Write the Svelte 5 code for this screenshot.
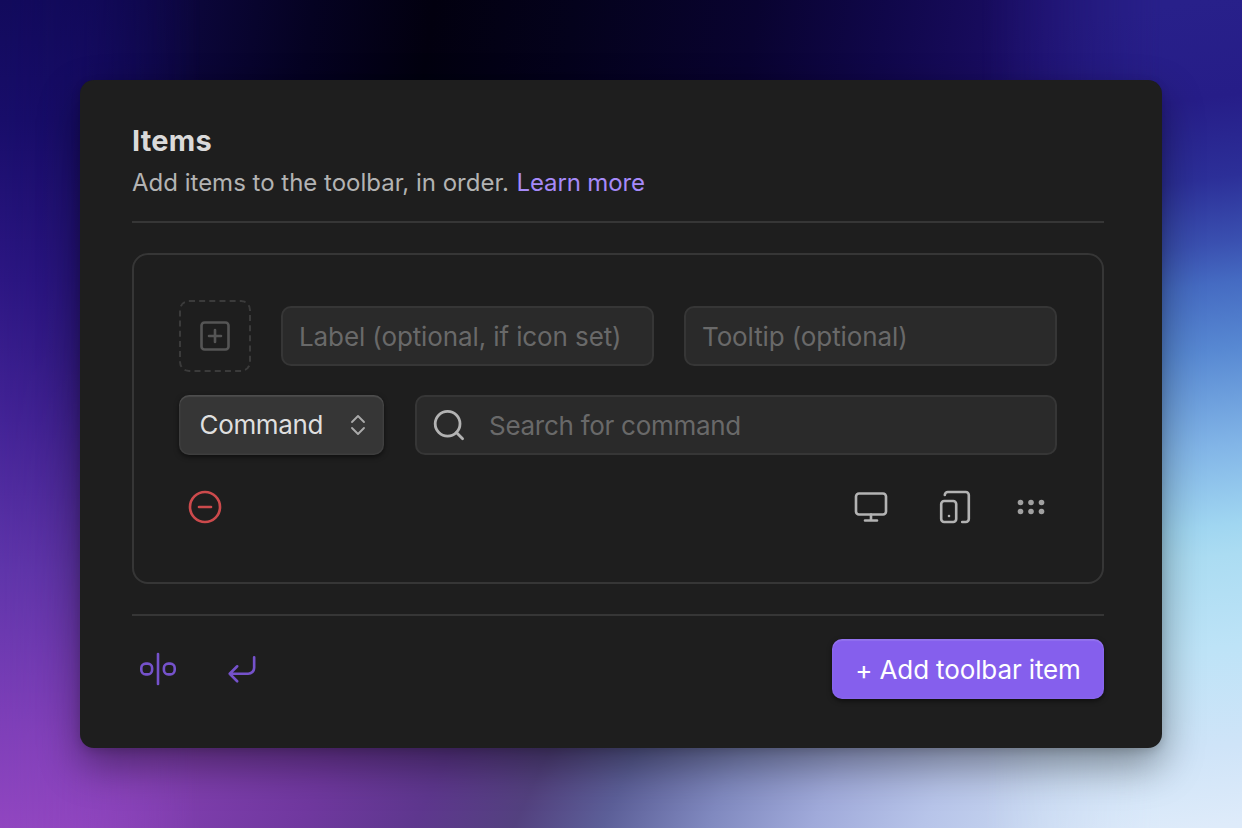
<script>
  let label = $state('');
  let tooltip = $state('');
  let query = $state('');
</script>

<main class="stage">
  <div class="wash bottom"></div>
  <div class="wash left"></div>
  <div class="wash right"></div>
  <section class="panel">
    <header>
      <h1>Items</h1>
      <p>Add items to the toolbar, in order. <a href="#learn">Learn more</a></p>
    </header>

    <div class="item">
      <div class="row first">
        <button class="icon-slot" aria-label="Choose icon">
          <svg width="36" height="36" viewBox="0 0 24 24"><rect x="3" y="3" width="18" height="18" rx="2" /><path d="M8 12h8M12 8v8" /></svg>
        </button>
        <input class="field" bind:value={label} placeholder="Label (optional, if icon set)" />
        <input class="field tip" bind:value={tooltip} placeholder="Tooltip (optional)" />
      </div>
      <div class="row second">
        <button class="select">
          <span>Command</span>
          <svg width="16" height="22" viewBox="0 0 16 22"><path d="M2 8l6-6 6 6M2 14l6 6 6-6" /></svg>
        </button>
        <label class="field search">
          <svg width="36" height="36" viewBox="0 0 36 36"><circle cx="16.6" cy="16.8" r="12.4" /><path d="M25.4 25.6l6.2 6.2" /></svg>
          <input bind:value={query} placeholder="Search for command" />
        </label>
      </div>
      <div class="row actions">
        <button class="ico remove" aria-label="Remove">
          <svg width="36" height="36" viewBox="0 0 24 24"><circle cx="12" cy="12" r="10" /><path d="M8 12h8" /></svg>
        </button>
        <div class="tools">
          <button class="ico" aria-label="Desktop">
            <svg width="36" height="36" viewBox="0 0 24 24"><rect x="2" y="3" width="20" height="14" rx="2" /><path d="M8 21h8M12 17v4" /></svg>
          </button>
          <button class="ico" aria-label="Mobile">
            <svg width="36" height="36" viewBox="0 0 24 24"><rect x="2.8" y="8" width="10" height="14" rx="2" /><path d="M5.2 4a2 2 0 0 1 2-2h12a2 2 0 0 1 2 2v16a2 2 0 0 1-2 2h-2.4M8 18h.01" /></svg>
          </button>
          <button class="ico grip" aria-label="Reorder">
            <svg width="30" height="18" viewBox="0 0 30 18">
              {#each [4.5, 15, 25.5] as x}
                {#each [4.5, 13.5] as y}
                  <circle cx={x} cy={y} r="2.8" />
                {/each}
              {/each}
            </svg>
          </button>
        </div>
      </div>
    </div>

    <footer>
      <div class="extras">
        <button class="ico" aria-label="Add separator">
          <svg width="36" height="36" viewBox="0 0 36 36"><rect x="1.3" y="12.6" width="10.8" height="10.8" rx="4.4" /><rect x="23.9" y="12.6" width="10.8" height="10.8" rx="4.4" /><path d="M18 3v30" /></svg>
        </button>
        <button class="ico" aria-label="Add break">
          <svg width="36" height="36" viewBox="0 0 24 24"><path d="M9 10l-5 5 5 5M20.3 4v7a4 4 0 0 1-4 4H4" transform="translate(-.2 .2)" /></svg>
        </button>
      </div>
      <button class="add"><span>+ Add toolbar item</span></button>
    </footer>
  </section>
</main>

<style>
  :global(body) { margin: 0; overflow: hidden; }
  * { box-sizing: border-box; }
  .stage {
    position: relative;
    width: 1242px;
    height: 828px;
    padding: 80px;
    overflow: hidden;
    font-family: Inter, "Liberation Sans", sans-serif;
    font-weight: 400;
    background: linear-gradient(98deg, #120a5c 0, #100850 90px, #0b0639 200px, #050222 310px, #02000f 430px, #04021c 570px, #090330 750px, #10074a 880px, #1c0e68 1040px, #2a228c 1290px);
  }
  .wash { position: absolute; inset: 0; }
  .bottom {
    background: linear-gradient(115deg, #9045bf 350px, #8440b2 460px, #70389f 620px, #5e378e 725px, #53417f 815px, #5c5f98 895px, #8089bf 990px, #a0aada 1085px, #b7c4e9 1185px, #c7d6f0 1290px, #deebfa 1476px);
    mask-image: linear-gradient(transparent 350px, #000 740px);
  }
  .left {
    background: linear-gradient(#120a5c 0, #180d6a 120px, #2c1683 280px, #432396 420px, #5f35aa 570px, #7b3eb7 710px, #9146c0 828px);
    mask-image: linear-gradient(90deg, #000, #000c 80px, transparent 200px);
  }
  .right {
    background: linear-gradient(172deg, #28208a 167px, #261d88 265px, #2c2f98 345px, #3a50b0 410px, #456bc2 450px, #5788d2 515px, #82b5e7 612px, #a0d6f1 690px, #abdcf2 720px, #bde3f7 810px, #cfe4f8 910px, #deebfa 987px);
    mask-image: linear-gradient(270deg, #000, #000 80px, transparent 260px);
  }
  .panel {
    position: relative;
    width: 1082px;
    height: 668px;
    padding: 40px 58px 48px 52px;
    border-radius: 14px;
    background: #1e1e1e;
    box-shadow: 0 18px 40px #0006, 0 3px 10px #0002;
  }
  header { height: 103px; border-bottom: 2px solid #363636; }
  h1 { margin: 0; padding-top: 1px; color: #dadada; font-size: 29px; line-height: 40px; font-weight: 650; letter-spacing: .2px; }
  p { margin: 4px 0 0; color: #b3b3b3; font-size: 24px; line-height: 36px; white-space: nowrap; }
  a { margin-left: 1px; color: #a68af9; letter-spacing: -.15px; text-decoration: none; }
  .item {
    height: 331px;
    margin-top: 30px;
    padding: 45px;
    border: 2px solid #363636;
    border-radius: 16px;
  }
  .row { display: flex; align-items: center; }
  .first { gap: 30px; height: 72px; }
  .second { gap: 31px; margin-top: 23px; height: 60px; }
  button { display: flex; align-items: center; justify-content: center; padding: 0; border: 0; background: none; font: inherit; }
  svg { display: block; flex: none; fill: none; stroke: currentColor; stroke-width: 1.75; stroke-linecap: round; stroke-linejoin: round; }
  .icon-slot { flex: none; width: 72px; height: 72px; border: 2px dashed #3b3b3b; border-radius: 10px; color: #555; }
  .field {
    flex: 1;
    min-width: 0;
    height: 60px;
    padding: 0 16px;
    border: 2px solid #363636;
    border-radius: 10px;
    background: #2a2a2a;
    color: #dadada;
    font-family: inherit;
    font-weight: inherit;
    font-size: 26px;
    letter-spacing: -.11px;
  }
  input { outline: 0; }
  input::placeholder { color: #696969; opacity: 1; }
  .search { display: flex; align-items: center; padding: 0 14px; color: #b3b3b3; }
  .search svg { stroke-width: 2.8; }
  .search input { flex: 1; margin: 0 0 0 22px; padding: 0; border: 0; background: none; color: #dadada; font: inherit; letter-spacing: -.28px; }
  .select {
    flex: none;
    justify-content: space-between;
    width: 205px;
    height: 60px;
    padding: 0 18px 0 20.5px;
    border-radius: 10px;
    background: #363636;
    color: #dfdfdf;
    font-size: 26px;
    letter-spacing: -.35px;
    box-shadow: inset 0 2px 1px #ffffff14, inset 0 0 0 1.5px #ffffff0b, 0 2px 5px #0008;
  }
  .select span { margin-top: -2px; }
  .select svg { color: #aaa; stroke-width: 1.9; }
  .actions { justify-content: space-between; margin-top: 26px; height: 52px; }
  .ico { width: 52px; height: 52px; color: #b3b3b3; }
  .remove { color: #cc4a4c; }
  .tools { display: flex; gap: 32px; }
  .grip { margin-left: -8px; }
  .grip svg { fill: #a0a0a0; stroke: none; }
  footer { display: flex; align-items: flex-start; justify-content: space-between; margin-top: 30px; padding-top: 23px; border-top: 2px solid #363636; }
  .extras { display: flex; gap: 32px; padding-top: 4px; }
  .extras .ico { color: #7552cb; }
  .extras .ico:first-child svg { stroke-width: 2.6; }
  .add {
    width: 272px;
    height: 60px;
    border-radius: 10px;
    background: #855fed;
    color: #fff;
    font-size: 26px;
    letter-spacing: -.12px;
    white-space: nowrap;
    box-shadow: inset 0 2px 1px #ffffff18, inset 0 0 0 1.5px #ffffff08, 0 2px 5px #0008;
  }
</style>
